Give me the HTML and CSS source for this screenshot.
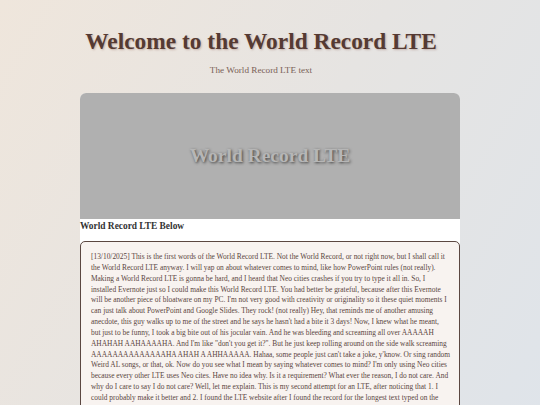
FILE: index.html
```html
<!DOCTYPE html>
<html lang="en">
<head>
<meta charset="utf-8">
<title>Welcome to the World Record LTE</title>
<link rel="stylesheet" href="styles.css">
</head>
<body>
<header class="site-header">
  <h1 class="title">Welcome to the World Record LTE</h1>
  <p class="subtitle">The World Record LTE text</p>
</header>
<main class="card">
  <div class="hero"><span class="hero-text">World Record LTE</span></div>
  <div class="caption">World Record LTE Below</div>
  <div class="lte-box">
    <p class="lte-text">[13/10/2025] This is the first words of the World Record LTE. Not the World Record, or not right now, but I shall call it<br>
the World Record LTE anyway. I will yap on about whatever comes to mind, like how PowerPoint rules (not really).<br>
Making a World Record LTE is gonna be hard, and I heard that Neo cities crashes if you try to type it all in. So, I<br>
installed Evernote just so I could make this World Record LTE. You had better be grateful, because after this Evernote<br>
will be another piece of bloatware on my PC. I'm not very good with creativity or originality so it these quiet moments I<br>
can just talk about PowerPoint and Google Slides. They rock! (not really) Hey, that reminds me of another amusing<br>
anecdote, this guy walks up to me of the street and he says he hasn't had a bite it 3 days! Now, I knew what he meant,<br>
but just to be funny, I took a big bite out of his jocular vain. And he was bleeding and screaming all over AAAAAH<br>
AHAHAH AAHAAAAHA. And I'm like "don't you get it?". But he just keep rolling around on the side walk screaming<br>
AAAAAAAAAAAAAAHA AHAH A AHHAAAAA. Hahaa, some people just can't take a joke, y'know. Or sing random<br>
Weird AL songs, or that, ok. Now do you see what I mean by saying whatever comes to mind? I'm only using Neo cities<br>
because every other LTE uses Neo cites. Have no idea why. Is it a requirement? What ever the reason, I do not care. And<br>
why do I care to say I do not care? Well, let me explain. This is my second attempt for an LTE, after noticing that 1. I<br>
could probably make it better and 2. I found the LTE website after I found the record for the longest text typed on the<br>
computer. So here we are, and I will just keep on typing until I run out of things to say.</p>
  </div>
</main>
</body>
</html>
```

FILE: styles.css
```css
html, body {
  margin: 0;
  padding: 0;
}
body {
  min-height: 405px;
  background: linear-gradient(120deg, #efe6dc 0%, #e6e4e2 50%, #dfe4ea 100%);
  font-family: "Liberation Serif", "Times New Roman", serif;
  color: #5a4540;
}
.site-header {
  text-align: center;
  padding: 26px 18px 0 0;
}
.title {
  margin: 0;
  font-size: 23.4px;
  font-weight: bold;
  line-height: 30px;
  color: #553a33;
  text-shadow: 1px 1px 2px rgba(150, 110, 100, 0.45);
}
.subtitle {
  margin: 8px 0 0;
  font-size: 9.2px;
  line-height: 12px;
  color: #7a5f57;
}
.card {
  width: 380px;
  margin: 17px auto 0;
  background: #ffffff;
  border-radius: 6px 6px 0 0;
}
.hero {
  height: 126px;
  background: #b0b0b0;
  border-radius: 6px 6px 0 0;
  display: flex;
  align-items: center;
  justify-content: center;
}
.hero-text {
  font-size: 19.5px;
  font-weight: bold;
  color: #b6b6b6;
  text-shadow: 1px 1px 3px rgba(0, 0, 0, 0.65);
}
.caption {
  height: 22px;
  font-size: 9.4px;
  font-weight: bold;
  line-height: 15px;
  color: #333;
}
.lte-box {
  border: 1px solid #5b4741;
  border-radius: 5px;
  background: #f8f3f0;
  padding: 10px 2px 10px 10px;
}
.lte-text {
  margin: 0;
  font-size: 7.42px;
  line-height: 10.85px;
  color: #5a4540;
  white-space: nowrap;
}
```
